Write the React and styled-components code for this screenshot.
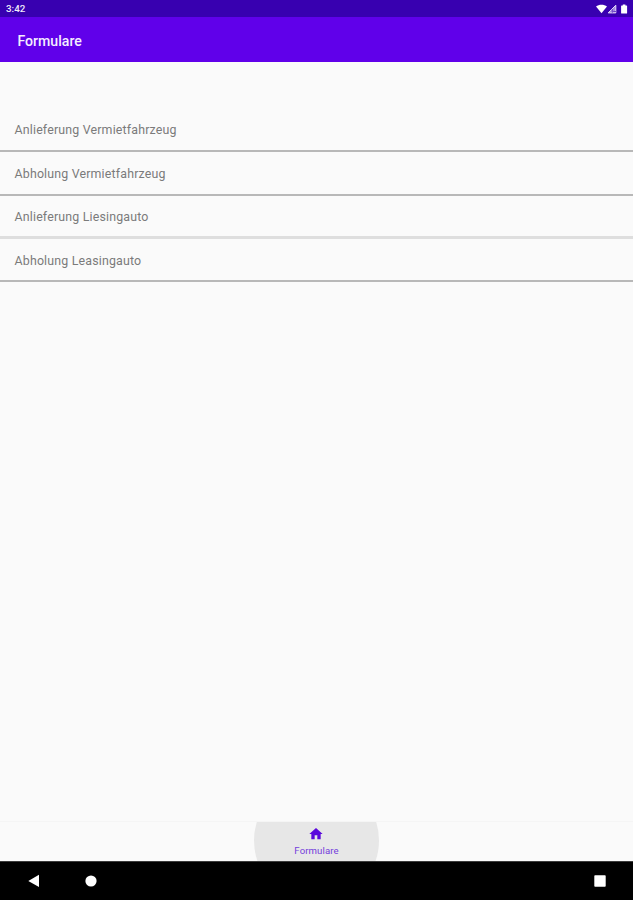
import React from "react";
import styled, { createGlobalStyle } from "styled-components";

const GlobalStyle = createGlobalStyle`
  body { margin: 0; background: #fafafa; font-family: Roboto, sans-serif; }
  * { box-sizing: border-box; }
`;

const Screen = styled.div`
  display: flex;
  flex-direction: column;
  width: 100%;
  height: 900px;
  overflow: hidden;
  background: #fafafa;
`;

const StatusBar = styled.header`
  display: flex;
  align-items: center;
  justify-content: space-between;
  height: 17px;
  flex: none;
  padding: 1px 4px 0 6px;
  background: #3800b0;
  color: #f0eafa;
`;

const Clock = styled.span`
  font-size: 9.8px;
  font-weight: 500;
  line-height: 16px;
`;

const StatusIcons = styled.svg`
  display: block;
  width: 34px;
  height: 12px;
`;

const AppBar = styled.div`
  display: flex;
  align-items: center;
  flex: none;
  height: 45px;
  padding: 2px 17.5px 0;
  background: #6000ea;
`;

const Title = styled.h1`
  margin: 0;
  color: #f4edff;
  font-size: 14.1px;
  font-weight: 500;
  line-height: 20px;
`;

const FormList = styled.ul`
  flex: 1;
  margin: 0;
  padding: 46px 0 0;
  list-style: none;
`;

const FormItem = styled.li`
  display: flex;
  align-items: center;
  height: ${(p) => p.$height}px;
  padding: ${(p) => p.$top || 0}px 14.5px 0;
  border-bottom: ${(p) => (p.$soft ? "3px solid #dedede" : "2px solid #b8b8b8")};
  color: #7b7b7b;
  font-size: 12.4px;
  letter-spacing: 0.17px;
  white-space: nowrap;
`;

const TabBar = styled.nav`
  display: flex;
  justify-content: center;
  flex: none;
  height: 40px;
  overflow: hidden;
  border-top: 1px solid #f5f5f5;
`;

const Tab = styled.a`
  display: flex;
  flex-direction: column;
  align-items: center;
  flex: none;
  width: 125px;
  height: 125px;
  margin-top: -44px;
  padding-top: 48px;
  border-radius: 50%;
  background: #e7e7e7;
  color: #5a08dc;
`;

const HomeIcon = styled.svg`
  display: block;
  width: 16px;
  height: 16px;
  margin-right: 1px;
`;

const TabLabel = styled.span`
  margin-top: 3px;
  color: #7440dc;
  font-size: 9.6px;
  line-height: 12px;
  letter-spacing: 0.1px;
`;

const SystemNav = styled.footer`
  display: flex;
  align-items: center;
  flex: none;
  height: 39px;
  padding: 0 27.5px 0 28px;
  border-top: 1px solid #3c3c3c;
  background: #000;
`;

const NavIcon = styled.svg`
  display: block;
  width: 12px;
  height: 14px;
  margin-left: ${(p) => p.$gap || "0"};
  fill: #fff;
`;

const forms = [
  { name: "Anlieferung Vermietfahrzeug", height: 44 },
  { name: "Abholung Vermietfahrzeug", height: 44, top: 1 },
  { name: "Anlieferung Liesingauto", height: 43, top: 1, soft: true },
  { name: "Abholung Leasingauto", height: 43, top: 1 },
];

export default function App() {
  return (
    <Screen>
      <GlobalStyle />
      <StatusBar>
        <Clock>3:42</Clock>
        <StatusIcons viewBox="0 0 34 12">
          <path d="M1 3.6C4 1.1 9 1.1 12 3.6L6.5 10.2Z" fill="#fff" />
          <path d="M20.8 2.2V9.9H13.2Z" fill="#a48add" stroke="#e4d9fa" strokeWidth="1" />
          <path d="M17.3 6V9.8M18.2 8.5H21" stroke="#5a2cc0" strokeWidth="0.8" />
          <path d="M27.8 1.5h2.6v1h1.2q.5 0 .5.6v6.8q0 .7-.6.7h-4.8q-.6 0-.6-.7V3.1q0-.6.5-.6h1.2z" fill="#fff" />
        </StatusIcons>
      </StatusBar>
      <AppBar>
        <Title>Formulare</Title>
      </AppBar>
      <FormList>
        {forms.map((f) => (
          <FormItem key={f.name} $height={f.height} $top={f.top} $soft={f.soft}>
            {f.name}
          </FormItem>
        ))}
      </FormList>
      <TabBar>
        <Tab>
          <HomeIcon viewBox="0 0 24 24">
            <path d="M10 20v-6h4v6h5v-8h3L12 3 2 12h3v8z" fill="currentColor" />
          </HomeIcon>
          <TabLabel>Formulare</TabLabel>
        </Tab>
      </TabBar>
      <SystemNav>
        <NavIcon viewBox="0 0 12 14">
          <path d="M0.3 7L11 .8V13z" />
        </NavIcon>
        <NavIcon viewBox="0 0 12 14" $gap="44.5px">
          <circle cx="6" cy="7" r="5.6" />
        </NavIcon>
        <NavIcon viewBox="0 0 12 14" $gap="auto">
          <rect x="0.3" y="1.3" width="11.4" height="11.4" rx="0.8" />
        </NavIcon>
      </SystemNav>
    </Screen>
  );
}
